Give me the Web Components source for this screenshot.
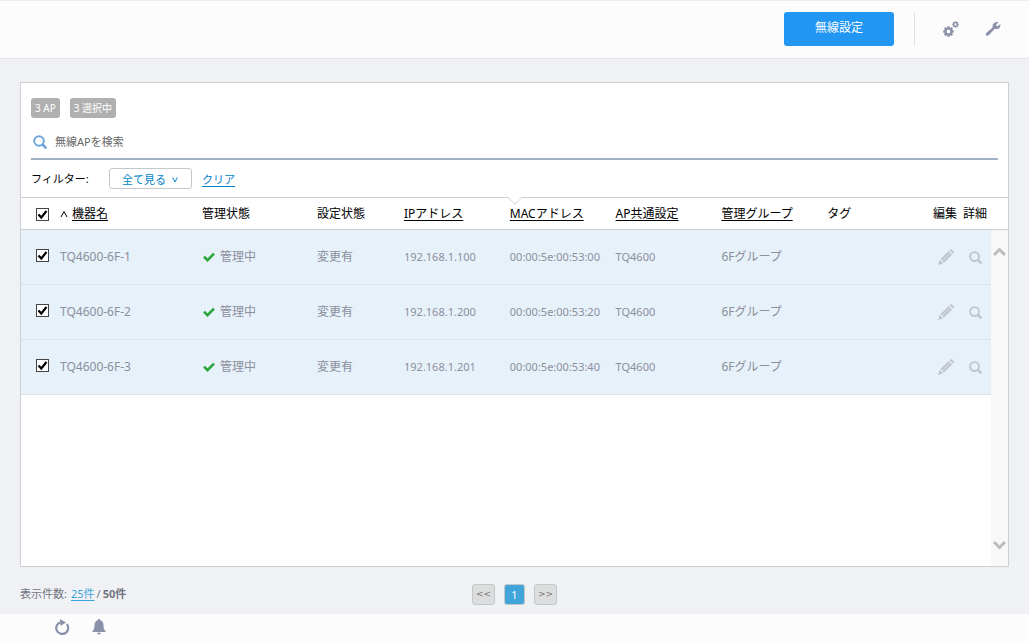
<!DOCTYPE html>
<html lang="ja">
<head>
<meta charset="utf-8">
<meta name="viewport" content="width=device-width, initial-scale=1">
<title>無線設定</title>
<style>
html, body { margin: 0; }
body {
  font: 12px/18px "Noto Sans", "Noto Sans CJK JP", sans-serif;
  color: #000;
  background: #f0f1f5;
}
</style>
</head>
<body>
<wireless-app></wireless-app>
<script>
const define = (name, html, setup) => {
  const template = document.createElement('template');
  template.innerHTML = html;
  customElements.define(name, class extends HTMLElement {
    constructor() {
      super();
      this.attachShadow({ mode: 'open' }).append(template.content.cloneNode(true));
      if (setup) setup(this.shadowRoot);
    }
  });
};

const gear = (cx, cy, r, ring, tooth, teeth) => {
  let spokes = '';
  for (let i = 0; i < teeth; i++) {
    spokes += `<path d="M${cx} ${cy - r}v${-tooth}" stroke-width="${tooth}" transform="rotate(${i * 360 / teeth} ${cx} ${cy})"/>`;
  }
  return `<circle cx="${cx}" cy="${cy}" r="${r}" stroke-width="${ring}"/>${spokes}`;
};

const icons = {
  gears: `<svg width="16" height="16" viewBox="0 0 16 16" fill="none" stroke="currentColor">${gear(5.5, 10.5, 3, 2.2, 2.3, 8)}${gear(12.5, 3.5, 1.8, 1.3, 1.5, 8)}</svg>`,
  wrench: `<svg width="16" height="16" viewBox="0 0 16 16" fill="currentColor"><path d="M13.6 1.2 11.2 3.6l.3 1.3 1.3.3 2.4-2.3c.7 2.6-.9 5-3.2 5.2-.9.1-1.6-.1-2.2-.3L3.7 14.3c-1.7 1.5-3.9-.6-2.4-2.3L7.6 6.500c-.6-3.200 2.400-6.300 6-5.300z"/></svg>`,
  search: `<svg width="100%" height="100%" viewBox="0 0 14 14" fill="none" stroke="currentColor"><circle cx="6" cy="6" r="4.800" stroke-width="2"/><path d="m9.500 9.500 3.800 3.800" stroke-width="2.600"/></svg>`,
  pencil: `<svg width="16" height="16" viewBox="0 0 16 16" fill="currentColor"><path d="m11.500 1.200 1-1h1.200l2.200 2.200v1.200l-1 1zM10.700 2l3.400 3.400-8.300 8.300-3.400-3.400zM1.700 11l3.400 3.400L0 16z"/><path d="m4 12.100 8.400-8.400" stroke="#e7f1fa" stroke-width=".7"/></svg>`,
  check: `<svg width="12" height="10" viewBox="0 0 12 10" fill="none" stroke="#2aa738" stroke-width="2.600"><path d="m1 4.700 3.500 3.500L11 1.700"/></svg>`,
  refresh: `<svg width="16" height="16" viewBox="0 0 16 16" fill="none" stroke="currentColor" stroke-width="2.200"><path d="M12.800 5A6 6 0 1 1 6.500 3.200"/><path d="M6 0l6 3.600L6.500 7z" fill="currentColor" stroke="none"/></svg>`,
  bell: `<svg width="14" height="16" viewBox="0 0 14 16" fill="currentColor"><path d="M7 0c.8 0 1.200.6 1.300 1.200C10.700 2 11.500 4 11.500 6c0 3 .5 4.700 2 6v1H.5v-1c1.500-1.300 2-3 2-6 0-2 .8-4 3.200-4.800C5.800.6 6.200 0 7 0zM5 13.800h4c-.2 2-3.800 2-4 0z"/></svg>`,
  up: `<svg width="13" height="10" viewBox="0 0 13 10" fill="none" stroke="#bcbcbc" stroke-width="3"><path d="m1 8 5.500-5.500L12 8"/></svg>`,
  down: `<svg width="13" height="10" viewBox="0 0 13 10" fill="none" stroke="#bcbcbc" stroke-width="3"><path d="m1 2 5.500 5.500L12 2"/></svg>`
};

const buttonReset = `
  button { font: inherit; color: inherit; background: none; border: 0; padding: 0; margin: 0; cursor: pointer; }
  svg { display: block; }
`;

define('app-header', `
<style>
  ${buttonReset}
  :host { display: block; }
  header {
    display: flex; align-items: center; justify-content: flex-end;
    box-sizing: border-box; height: 59px; padding: 0 28px 2px 20px;
    background: #fcfcfc; border-top: 1px solid #eeeeee; border-bottom: 1px solid #e2e5e9;
    color: #8a90a8;
  }
  .primary { width: 110px; height: 34px; padding-bottom: 2px; border-radius: 3px; background: #2196f3; color: #fff; }
  .tools { display: flex; gap: 26px; margin-left: 20px; padding-left: 28px; height: 34px; align-items: center; border-left: 1px solid #dce3ea; }
</style>
<header>
  <button class="primary">無線設定</button>
  <div class="tools">
    <button aria-label="設定">${icons.gears}</button>
    <button aria-label="ツール">${icons.wrench}</button>
  </div>
</header>`);

define('count-badge', `
<style>
  :host {
    display: block; box-sizing: border-box; height: 20px; padding: 0 4px;
    border-radius: 3px; background: #b0b0b0; color: #fff; font-size: 10px; line-height: 20px; white-space: nowrap;
  }
</style>
<slot></slot>`);

define('ap-search', `
<style>
  :host { display: block; }
  label {
    display: flex; align-items: center; gap: 8px; box-sizing: border-box; height: 34px; padding-left: 2px;
    border-bottom: 2px solid #9fb3c5;
  }
  .icon { width: 14px; height: 14px; color: #6fa5dc; }
  svg { display: block; }
  input { flex: 1; min-width: 0; border: 0; padding: 0; outline: 0; background: none; font: inherit; font-size: 11px; color: #333; }
  input::placeholder { color: #666; opacity: 1; }
</style>
<label><span class="icon">${icons.search}</span><input type="search" placeholder="無線APを検索" aria-label="無線APを検索"></label>`);

define('ap-filter', `
<style>
  :host { display: flex; align-items: center; padding: 8px 0; font-size: 11px; }
  label { width: 78px; }
  .drop { display: flex; align-items: center; position: relative; }
  select {
    appearance: none; box-sizing: border-box; width: 83px; height: 21px; margin: 0; padding: 2px 12px 0;
    border: 1px solid #c4c8cc; border-radius: 3px; background: #fff; color: #0082c8; font: inherit; line-height: 18px;
  }
  svg { position: absolute; right: 14px; top: 9px; pointer-events: none; }
  a { margin-left: 10px; padding-top: 2px; color: #0082c8; text-underline-offset: 2px; }
</style>
<label for="filter">フィルター:</label>
<span class="drop">
  <select id="filter"><option>全て見る</option></select>
  <svg width="6" height="6" viewBox="0 0 6 6" fill="none" stroke="#0082c8"><path d="m.7.5 2.300 4.500L5.300.5"/></svg>
</span>
<a href="#clear">クリア</a>`);

const aps = [
  ['TQ4600-6F-1', '192.168.1.100', '00:00:5e:00:53:00'],
  ['TQ4600-6F-2', '192.168.1.200', '00:00:5e:00:53:20'],
  ['TQ4600-6F-3', '192.168.1.201', '00:00:5e:00:53:40']
];

define('ap-table', `
<style>
  ${buttonReset}
  :host { display: flex; position: relative; }
  .list { flex: 1; min-width: 0; }
  table { width: 100%; table-layout: fixed; border-collapse: separate; border-spacing: 0; }
  th, td { box-sizing: border-box; padding: 0; text-align: left; font-weight: normal; white-space: nowrap; }
  th { height: 33px; border-top: 1px solid #cdd0d3; border-bottom: 1px solid #c9cdd1; }
  th a { color: inherit; text-underline-offset: 2px; }
  td { height: 55px; border-bottom: 1px solid #dde3e9; background: #e7f1fa; color: #8b8f9c; }
  th:first-child, td:first-child { padding-left: 15px; }
  .check { width: 39px; } .name { width: 142px; } .state { width: 115px; } .config { width: 87px; }
  .edit { width: 30px; } .detail { width: 28px; }
  .num { font-size: 11px; }
  .sort, .status { display: flex; align-items: center; }
  .sort { gap: 4px; }
  .status { gap: 5px; padding-left: 1px; }
  input {
    appearance: none; display: block; box-sizing: border-box; width: 13px; height: 13px; margin: 2px 0 0; border: 1px solid #444;
    background: #fff;
  }
  td input { margin: 0 0 3px; }
  input:checked {
    background: #fff url("data:image/svg+xml,%3Csvg xmlns='http://www.w3.org/2000/svg' viewBox='0 0 11 11'%3E%3Cpath d='M1.500 5.500l2.800 3L9.500 2' fill='none' stroke='%23000' stroke-width='2.200'/%3E%3C/svg%3E") center / 11px 11px no-repeat;
  }
  td button { display: block; color: #c0c5cb; }
  .edit-btn { margin-left: 5px; }
  .detail-btn { width: 13px; height: 13px; margin-left: 6px; }
  .scroll { display: flex; flex-direction: column; width: 17px; }
  .cap { box-sizing: border-box; height: 33px; border-top: 1px solid #cdd0d3; border-bottom: 1px solid #c9cdd1; }
  .track { flex: 1; display: flex; flex-direction: column; justify-content: space-between; padding: 13px 0; background: #f8f8f8; }
  .track button { display: grid; place-items: center; height: 17px; }
  .notch { position: absolute; top: 0; left: 50%; margin-left: -7px; }
</style>
<div class="list">
  <table>
    <thead><tr>
      <th class="check"><input type="checkbox" checked aria-label="全て選択"></th>
      <th class="name"><span class="sort"><svg width="8" height="8" viewBox="0 0 8 8" fill="none" stroke="#000"><path d="M1 7 4 1.500 7 7"/></svg><a href="#name">機器名</a></span></th>
      <th class="state">管理状態</th>
      <th class="config">設定状態</th>
      <th><a href="#ip">IPアドレス</a></th>
      <th><a href="#mac">MACアドレス</a></th>
      <th><a href="#common">AP共通設定</a></th>
      <th><a href="#group">管理グループ</a></th>
      <th>タグ</th>
      <th class="edit">編集</th>
      <th class="detail">詳細</th>
    </tr></thead>
    <tbody></tbody>
  </table>
</div>
<div class="scroll">
  <div class="cap"></div>
  <div class="track"><button aria-label="上へ">${icons.up}</button><button aria-label="下へ">${icons.down}</button></div>
</div>
<svg class="notch" width="14" height="8" viewBox="0 0 14 8"><path d="M0 0h14L7 7z" fill="#fff"/><path d="M0 .5 7 7 14 .5" fill="none" stroke="#d4d6d9"/></svg>`,
root => {
  root.querySelector('tbody').innerHTML = aps.map(([name, ip, mac]) => `
    <tr>
      <td><input type="checkbox" checked aria-label="${name}"></td>
      <td>${name}</td>
      <td><span class="status">${icons.check}<span>管理中</span></span></td>
      <td>変更有</td>
      <td class="num">${ip}</td>
      <td class="num">${mac}</td>
      <td class="num">TQ4600</td>
      <td>6Fグループ</td>
      <td></td>
      <td><button class="edit-btn" aria-label="編集">${icons.pencil}</button></td>
      <td><button class="detail-btn" aria-label="詳細">${icons.search}</button></td>
    </tr>`).join('');
});

define('ap-panel', `
<style>
  :host { display: flex; flex-direction: column; border: 1px solid #cdd0d3; background: #fff; }
  .tools { padding: 15px 10px 0; }
  .badges { display: flex; gap: 10px; margin-bottom: 8px; }
  ap-table { flex: 1; }
</style>
<div class="tools">
  <div class="badges"><count-badge>3 AP</count-badge><count-badge>3 選択中</count-badge></div>
  <ap-search></ap-search>
  <ap-filter></ap-filter>
</div>
<ap-table></ap-table>`);

define('list-pager', `
<style>
  ${buttonReset}
  :host {
    display: grid; grid-template-columns: 1fr auto 1fr; align-items: center; box-sizing: border-box; height: 47px; padding-top: 8px;
    font-size: 11px; color: #70747f;
  }
  .count { display: flex; gap: 2px; padding-bottom: 2px; }
  a { color: #38a3d8; text-underline-offset: 2px; margin-left: 2px; }
  nav { display: flex; gap: 9px; }
  nav button {
    box-sizing: border-box; width: 23px; height: 21px; border: 1px solid #c5c7ca; border-radius: 3px; background: #dcdddd;
    color: #777; font: 9px/19px "DejaVu Sans", sans-serif;
  }
  nav .current { width: 21px; background: #41a5da; color: #fff; font: 11px/18px "Noto Sans", sans-serif; }
</style>
<div class="count"><span>表示件数:</span><a href="#25">25件</a><span>/</span><b>50件</b></div>
<nav aria-label="ページ"><button>&lt;&lt;</button><button class="current">1</button><button>&gt;&gt;</button></nav>`);

define('app-footer', `
<style>
  ${buttonReset}
  :host { display: block; }
  footer { display: flex; align-items: center; gap: 22px; box-sizing: border-box; height: 28px; padding: 0 54px 2px; background: #fcfcfc; color: #8a90a8; }
</style>
<footer><button aria-label="更新">${icons.refresh}</button><button aria-label="通知">${icons.bell}</button></footer>`);

define('wireless-app', `
<style>
  :host { display: flex; flex-direction: column; min-height: 100vh; }
  main { flex: 1; display: flex; flex-direction: column; padding: 23px 20px 0; }
  ap-panel { flex: 1; }
</style>
<app-header></app-header>
<main><ap-panel></ap-panel><list-pager></list-pager></main>
<app-footer></app-footer>`);
</script>
</body>
</html>
